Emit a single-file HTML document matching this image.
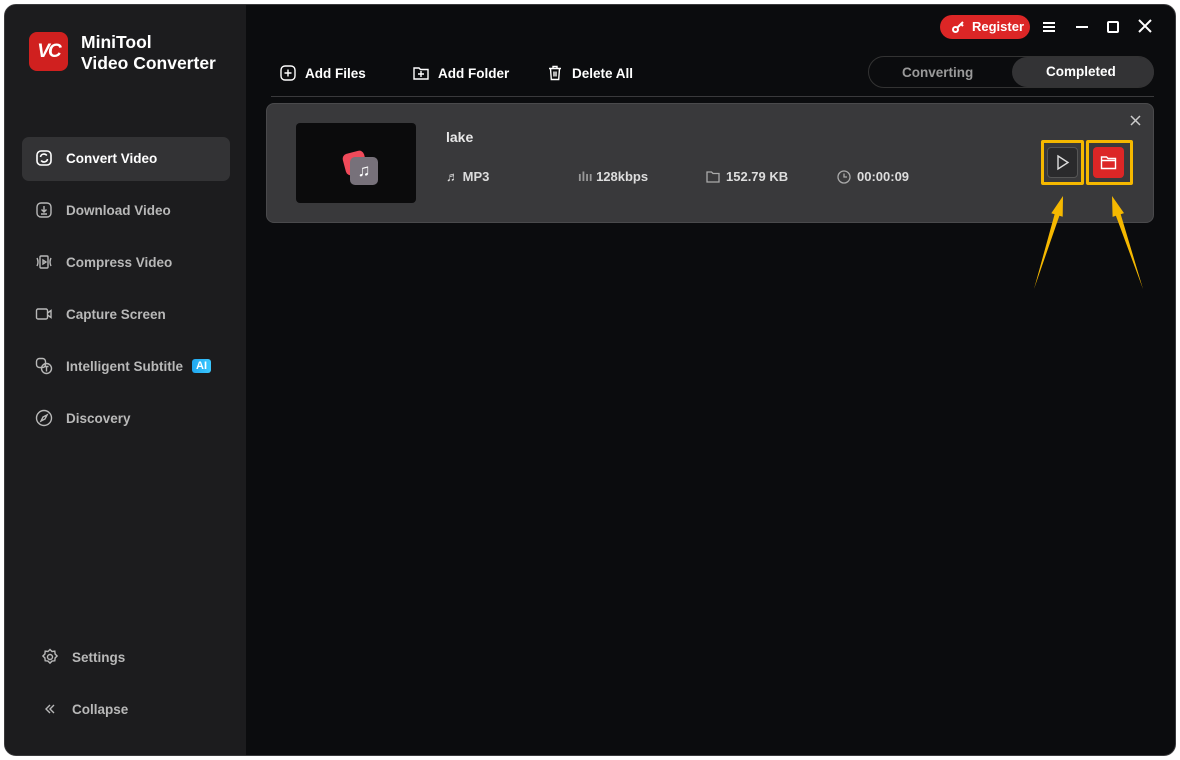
<!DOCTYPE html><html><head><style>
*{margin:0;padding:0;box-sizing:border-box}
body{width:1180px;height:760px;background:#fff;font-family:"Liberation Sans",sans-serif;overflow:hidden;position:relative}
.win{position:absolute;left:4px;top:4px;width:1172px;height:752px;border-radius:12px;background:#0b0c0e;border:1px solid #3a3a3c;overflow:hidden}
.side{position:absolute;left:0;top:0;width:241px;height:750px;background:#1c1c1e}
.t{position:absolute;color:#fff;font-weight:bold;white-space:nowrap}
.nav{position:absolute;left:37px;color:#b8b8b8;font-size:13.5px;font-weight:bold;display:flex;align-items:center;gap:13px}
.nav svg{width:18px;height:18px}
</style></head><body><div class="win">
<div class="side">
<div style="position:absolute;left:24px;top:27px;width:39px;height:39px;border-radius:8px;background:#d0201f;color:#fff;font-weight:bold;font-size:19px;font-style:italic;display:flex;align-items:center;justify-content:center;letter-spacing:-2px">VC</div>
<div class="t" style="left:76px;top:27px;font-size:17.5px;line-height:21px">MiniTool<br>Video Converter</div>
<div style="position:absolute;left:17px;top:132px;width:208px;height:44px;border-radius:7px;background:#333335"></div>
<div class="nav" style="top:144px;color:#fff;left:30px"><svg viewBox="0 0 18 18" fill="none" stroke="#fff" stroke-width="1.6"><rect x="2" y="2" width="14" height="14" rx="4"/><path d="M5.5 8a3.5 3.5 0 0 1 6.3-1.5M12.5 10a3.5 3.5 0 0 1-6.3 1.5"/></svg>Convert Video</div>
<div class="nav" style="top:196px;left:30px"><svg viewBox="0 0 18 18" fill="none" stroke="#b8b8b8" stroke-width="1.4"><rect x="2" y="2" width="14" height="14" rx="4"/><path d="M9 5v6M6.5 8.5 9 11l2.5-2.5M6 13h6"/></svg>Download Video</div>
<div class="nav" style="top:248px;left:30px"><svg viewBox="0 0 18 18" fill="none" stroke="#b8b8b8" stroke-width="1.4"><rect x="5" y="3" width="8" height="12" rx="1"/><path d="M8 7v4l3-2zM2 5q2 4 0 8M16 5q-2 4 0 8"/></svg>Compress Video</div>
<div class="nav" style="top:300px;left:30px"><svg viewBox="0 0 18 18" fill="none" stroke="#b8b8b8" stroke-width="1.4"><rect x="1.5" y="4" width="11" height="10" rx="1.5"/><path d="M12.5 8 16 5.5v7L12.5 10"/></svg>Capture Screen</div>
<div class="nav" style="top:352px;left:30px"><svg viewBox="0 0 18 18" fill="none" stroke="#b8b8b8" stroke-width="1.4"><rect x="1.5" y="1.5" width="9" height="9" rx="3"/><circle cx="11.5" cy="11.5" r="5"/><path d="M9.5 9.5h4M11.5 9.5v5"/></svg>Intelligent Subtitle <span style="background:linear-gradient(90deg,#1fa7f0,#3cc8ff);color:#fff;font-size:11px;padding:1px 4px;border-radius:3px;margin-left:-4px">AI</span></div>
<div class="nav" style="top:404px;left:30px"><svg viewBox="0 0 18 18" fill="none" stroke="#b8b8b8" stroke-width="1.4"><circle cx="9" cy="9" r="7.5"/><path d="M12 6 10 10 6 12 8 8z"/></svg>Discovery</div>
<div class="nav" style="top:643px;left:36px"><svg viewBox="0 0 18 18" fill="none" stroke="#b8b8b8" stroke-width="1.4"><circle cx="9" cy="9" r="2.5"/><path d="M9 1.5l2 2 2.8-.3.3 2.8 2 2-2 2-.3 2.8-2.8.3-2 2-2-2-2.8-.3-.3-2.8-2-2 2-2 .3-2.8 2.8.3z"/></svg>Settings</div>
<div class="nav" style="top:695px;left:36px"><svg viewBox="0 0 18 18" fill="none" stroke="#b8b8b8" stroke-width="1.4"><path d="M9 5 5 9l4 4M13 5 9 9l4 4"/></svg>Collapse</div>
</div>
<div style="position:absolute;left:935px;top:10px;width:90px;height:24px;border-radius:12px;background:#dc2626;color:#fff;font-size:13px;font-weight:bold;padding-left:32px;line-height:24px">Register<svg style="position:absolute;left:11px;top:5px" width="14" height="14" viewBox="0 0 14 14" fill="none" stroke="#fff" stroke-width="2"><circle cx="4.5" cy="9.5" r="2.5"/><path d="M6.5 7.5 12 2M10 4l2 2"/></svg></div>
<svg style="position:absolute;left:1037px;top:15px" width="14" height="14" stroke="#fff" stroke-width="2"><path d="M1 3h12M1 7h12M1 11h12"/></svg>
<svg style="position:absolute;left:1070px;top:15px" width="14" height="14" stroke="#fff" stroke-width="2"><path d="M1 7h12"/></svg>
<svg style="position:absolute;left:1101px;top:15px" width="14" height="14" fill="none" stroke="#fff" stroke-width="2"><rect x="2" y="2" width="10" height="10" rx="1"/></svg>
<svg style="position:absolute;left:1133px;top:14px" width="14" height="14" stroke="#fff" stroke-width="2"><path d="M1 1l12 12M13 1 1 13"/></svg>
<div class="t" style="left:275px;top:60px;font-size:13.5px;display:flex;align-items:center;gap:9px"><svg width="16" height="16" fill="none" stroke="#fff" stroke-width="1.4"><rect x="1" y="1" width="14" height="14" rx="4"/><path d="M8 4.5v7M4.5 8h7"/></svg>Add Files</div>
<div class="t" style="left:408px;top:60px;font-size:13.5px;display:flex;align-items:center;gap:9px"><svg width="16" height="16" fill="none" stroke="#fff" stroke-width="1.4"><path d="M1 3h5l1.5 1.5H15V14H1z"/><path d="M8 6v6M5 9h6"/></svg>Add Folder</div>
<div class="t" style="left:542px;top:60px;font-size:13.5px;display:flex;align-items:center;gap:9px"><svg width="16" height="16" fill="none" stroke="#fff" stroke-width="1.4"><path d="M2 3.5h12M6 3.5V1.5h4v2M3.5 3.5l.8 11h7.4l.8-11M7 6.5v5M9 6.5v5"/></svg>Delete All</div>
<div style="position:absolute;left:863px;top:51px;width:286px;height:32px;border-radius:16px;border:1px solid #333"></div>
<div class="t" style="left:897px;top:60px;font-size:13.5px;color:#9a9a9a">Converting</div>
<div style="position:absolute;left:1007px;top:52px;width:142px;height:30px;border-radius:15px;background:#333335"></div>
<div class="t" style="left:1041px;top:59px;font-size:13.5px">Completed</div>
<div style="position:absolute;left:266px;top:91px;width:883px;height:1px;background:#3a3a3c"></div>
<div style="position:absolute;left:261px;top:98px;width:888px;height:120px;border-radius:8px;background:#39393b;border:1px solid #4a4a4c"></div>
<div style="position:absolute;left:291px;top:118px;width:120px;height:80px;border-radius:4px;background:#0b0b0c"></div>
<div style="position:absolute;left:339px;top:147px;width:22px;height:22px;border-radius:5px;background:#f04a5a;transform:rotate(-15deg)"></div>
<div style="position:absolute;left:345px;top:152px;width:28px;height:28px;border-radius:5px;background:#77717a;color:#fff;font-size:17px;text-align:center;line-height:28px">♫</div>
<div class="t" style="left:441px;top:124px;font-size:14px;color:#e8e8e8">lake</div>
<div class="t" style="left:441px;top:164px;font-size:13px;color:#ddd">♬ MP3</div>
<div class="t" style="left:573px;top:164px;font-size:13px;color:#ddd"><span style="color:#999">ılıı</span> 128kbps</div>
<div class="t" style="left:701px;top:164px;font-size:13px;color:#ddd;display:flex;gap:6px;align-items:center"><svg width="14" height="12" fill="none" stroke="#aaa" stroke-width="1.3"><path d="M1 1h4.5l1.5 1.5H13V11H1z"/></svg>152.79 KB</div>
<div class="t" style="left:832px;top:164px;font-size:13px;color:#ddd;display:flex;gap:6px;align-items:center"><svg width="14" height="14" fill="none" stroke="#aaa" stroke-width="1.3"><circle cx="7" cy="7" r="6"/><path d="M7 3.5V7h3"/></svg>00:00:09</div>
<svg style="position:absolute;left:1125px;top:110px" width="11" height="11" stroke="#ccc" stroke-width="1.5"><path d="M1 1l9 9M10 1 1 10"/></svg>
<div style="position:absolute;left:1036px;top:135px;width:43px;height:45px;border:3px solid #f5b800;border-radius:2px"></div>
<div style="position:absolute;left:1042px;top:142px;width:31px;height:31px;border-radius:4px;background:#2a2a2c;border:1px solid #555"></div>
<svg style="position:absolute;left:1051px;top:149px" width="14" height="17" fill="none" stroke="#ddd" stroke-width="1.4"><path d="M2 2l10 6.5L2 15z"/></svg>
<div style="position:absolute;left:1081px;top:135px;width:47px;height:45px;border:3px solid #f5b800;border-radius:2px"></div>
<div style="position:absolute;left:1088px;top:142px;width:31px;height:31px;border-radius:4px;background:#dc2626"></div>
<svg style="position:absolute;left:1095px;top:150px" width="17" height="15" fill="none" stroke="#fff" stroke-width="1.4"><path d="M1.5 2h5l1.5 1.5h7.5v10h-14z M1.5 5.5h14"/></svg>
<svg style="position:absolute;left:0;top:0" width="1172" height="752"><polygon fill="#f5b800" points="1058,191 1057.7,211.8 1054.4,210.7 1029,284 1049.6,209.3 1046.3,208.2"/><polygon fill="#f5b800" points="1107,191 1119,208.1 1115.7,209.2 1138,284 1110.9,210.8 1107.6,211.9"/></svg>
</div></body></html>
